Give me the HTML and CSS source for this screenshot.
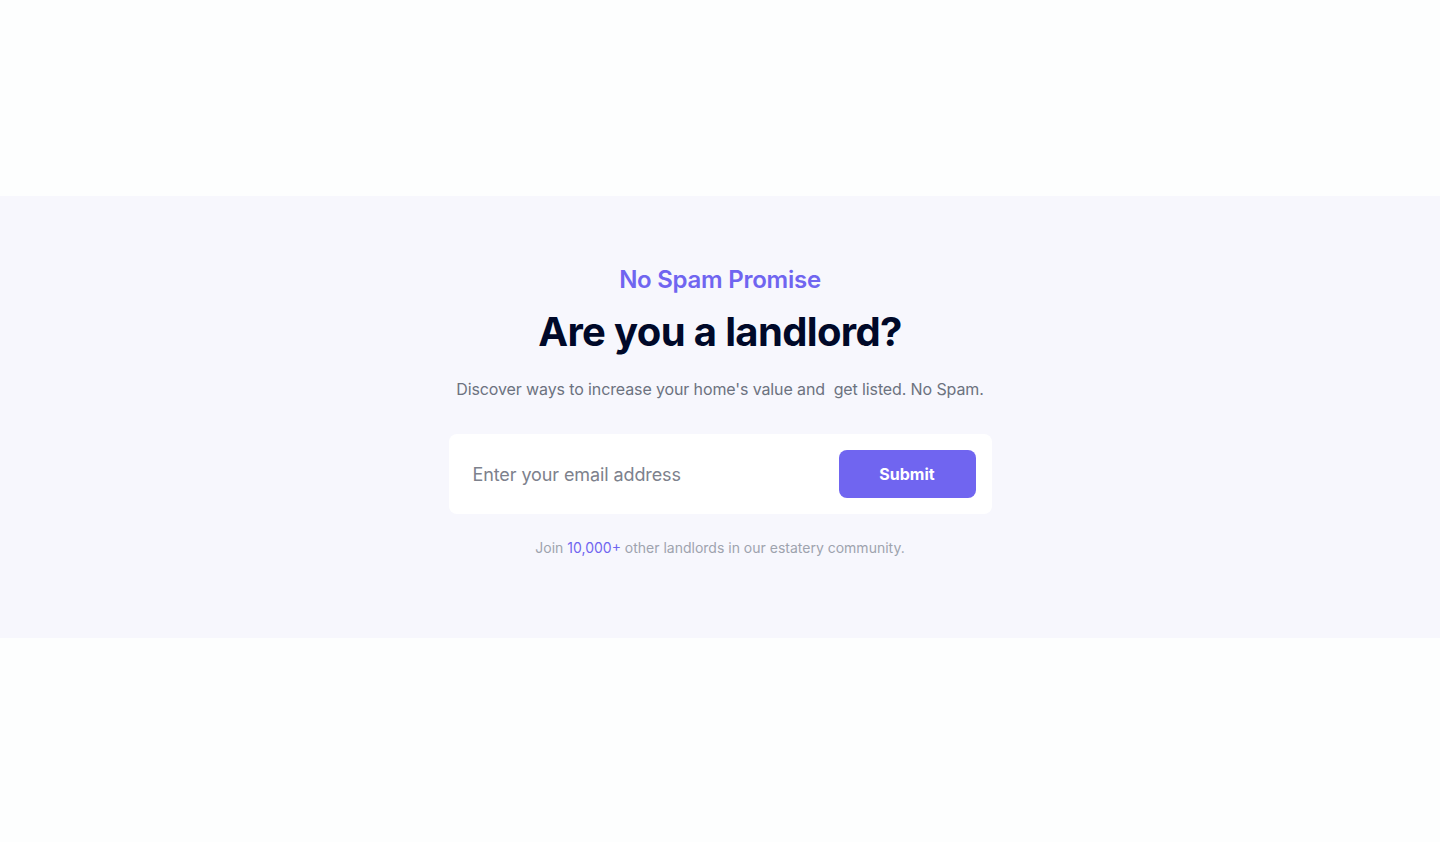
FILE: index.html
```html
<!DOCTYPE html>
<html lang="en">
<head>
<meta charset="utf-8">
<title>Are you a landlord?</title>
<link rel="stylesheet" href="styles.css">
</head>
<body>
<div class="page">
  <section class="newsletter">
    <p class="eyebrow">No Spam Promise</p>
    <h2 class="title">Are you a landlord?</h2>
    <p class="lead">Discover ways to increase your home's value and&nbsp; get listed. No Spam.</p>
    <form class="signup" onsubmit="return false;">
      <input class="email" type="email" placeholder="Enter your email address">
      <button class="submit" type="submit">Submit</button>
    </form>
    <p class="note">Join <span class="accent">10,000+</span> other landlords in our estatery community.</p>
  </section>
</div>
</body>
</html>
```
FILE: styles.css
```css
* { box-sizing: border-box; }
html, body { margin: 0; padding: 0; }
body {
  background: #fdfefe;
  font-family: Inter, "Noto Sans", "Liberation Sans", sans-serif;
  height: 842px;
}
.page {
  padding-top: 196px;
}
.newsletter {
  background: #f7f7fd;
  height: 442px;
  padding-top: 66px;
  display: flex;
  flex-direction: column;
  align-items: center;
  text-align: center;
}
.eyebrow {
  margin: 0;
  font-size: 24px;
  line-height: 36px;
  font-weight: 600;
  color: #7065f0;
  letter-spacing: -0.25px;
}
.title {
  margin: 8px 0 0;
  font-size: 40px;
  line-height: 52px;
  font-weight: 700;
  color: #000929;
  letter-spacing: -0.65px;
}
.lead {
  margin: 19px 0 0;
  font-size: 16px;
  line-height: 24px;
  color: #6c727f;
  letter-spacing: -0.12px;
}
.signup {
  margin-top: 33px;
  width: 543px;
  height: 80px;
  background: #ffffff;
  border-radius: 8px;
  display: flex;
  align-items: center;
  padding: 0 16px 0 24px;
  gap: 16px;
}
.email {
  flex: 1;
  border: none;
  outline: none;
  background: transparent;
  font-family: inherit;
  font-size: 18px;
  color: #000929;
  padding: 0;
  letter-spacing: -0.1px;
}
.email::placeholder { color: #7d818c; }
.submit {
  width: 137px;
  height: 48px;
  border: none;
  border-radius: 8px;
  background: #7065f0;
  color: #ffffff;
  font-family: inherit;
  font-size: 16px;
  font-weight: 700;
  cursor: pointer;
}
.note {
  margin: 24px 0 0;
  font-size: 14px;
  line-height: 20px;
  color: #9ea3ae;
  letter-spacing: 0;
}
.accent { color: #7065f0; }
```
